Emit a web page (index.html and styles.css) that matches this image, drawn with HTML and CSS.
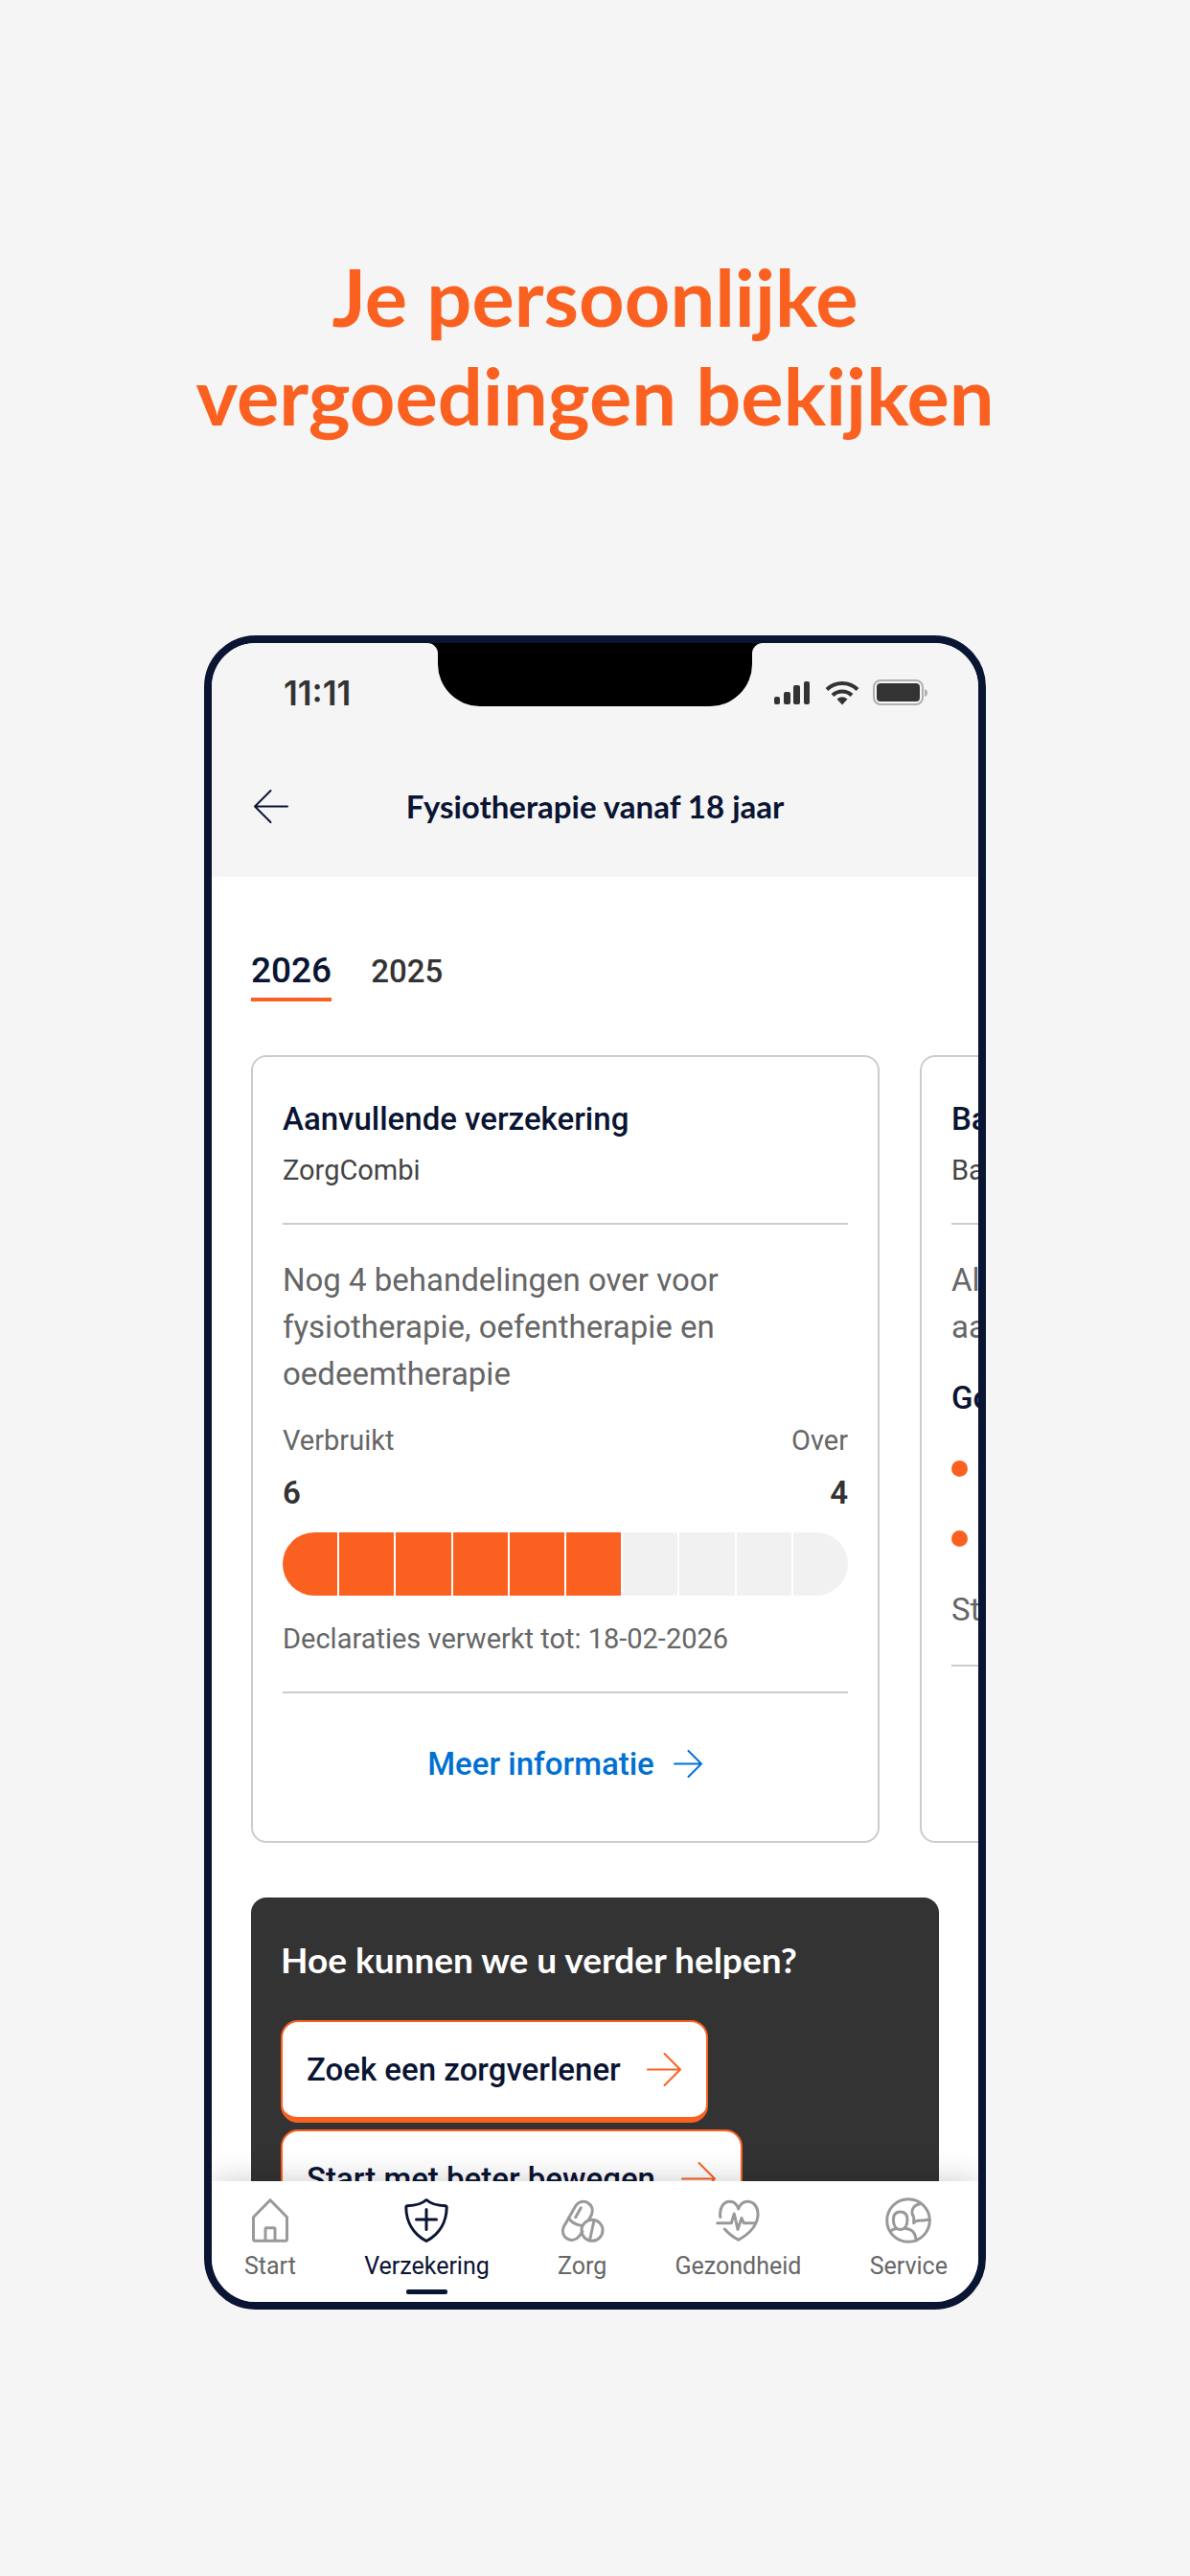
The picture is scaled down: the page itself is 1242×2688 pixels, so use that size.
FILE: index.html
```
<!DOCTYPE html>
<html lang="nl">

<head>
    <meta charset="UTF-8">
    <meta name="viewport" content="width=device-width, initial-scale=1.0">
    <title>Je persoonlijke vergoedingen bekijken</title>

    <link rel="stylesheet" href="styles.css">
</head>

<body>

    <h1 class="headline">Je persoonlijke<br>vergoedingen bekijken</h1>

    <div class="phone">

        <!-- Statusbalk -->
        <div class="status">
            <span class="time">11:11</span>
            <svg class="notch" width="350" height="66" viewBox="0 0 350 66">
                <path d="M0 0H350A11 11 0 0 0 339 11V22A44 44 0 0 1 295 66H55A44 44 0 0 1 11 22V11A11 11 0 0 0 0 0Z" />
            </svg>
            <svg class="signal" width="38" height="26" viewBox="0 0 38 26">
                <rect x="0" y="17" width="6" height="8" rx="2" />
                <rect x="10" y="12" width="7" height="13" rx="2" />
                <rect x="20" y="5" width="7" height="20" rx="2" />
                <rect x="31" y="1" width="6" height="24" rx="2" />
            </svg>
            <svg class="wifi" width="36" height="26" viewBox="0 0 36 26">
                <path class="arc" d="M2 9.500A23 23 0 0 1 34 9.500" />
                <path class="arc" d="M8 15.500A14.500 14.500 0 0 1 28 15.500" />
                <path d="M12.500 19.500Q18 15 23.500 19.500L18 25.500Z" />
            </svg>
            <svg class="battery" width="58" height="28" viewBox="0 0 58 28">
                <rect class="case" x="1" y="1" width="51" height="25" rx="7" />
                <rect x="4" y="4" width="45" height="19" rx="4" />
                <path class="cap" d="M54 10Q57 11 57 14T54 18Z" />
            </svg>
        </div>

        <header class="appbar">
            <a class="back" href="#" aria-label="Terug">
                <svg width="37" height="37" viewBox="0 0 37 37">
                    <path d="M36 18.500H2M18.500 2L2 18.500L18.500 35" />
                </svg>
            </a>
            <h2>Fysiotherapie vanaf 18 jaar</h2>
        </header>

        <main class="content">

            <nav class="years">
                <a class="active" href="#">2026</a>
                <a href="#">2025</a>
            </nav>

            <div class="cards">
                <section class="card">
                    <h3>Aanvullende verzekering</h3>
                    <p class="name">ZorgCombi</p>
                    <hr>
                    <p>Nog 4 behandelingen over voor fysiotherapie, oefentherapie en oedeemtherapie</p>
                    <dl class="usage">
                        <div>
                            <dt>Verbruikt</dt>
                            <dd>6</dd>
                        </div>
                        <div>
                            <dt>Over</dt>
                            <dd>4</dd>
                        </div>
                    </dl>
                    <div class="bar">
                        <i class="used"></i>
                        <i class="used"></i>
                        <i class="used"></i>
                        <i class="used"></i>
                        <i class="used"></i>
                        <i class="used"></i>
                        <i></i>
                        <i></i>
                        <i></i>
                        <i></i>
                    </div>
                    <p class="date">Declaraties verwerkt tot: 18-02-2026</p>
                    <hr>
                    <a class="more" href="#">
                        Meer informatie
                        <svg width="31" height="29" viewBox="0 0 31 29">
                            <path d="M1 14.500H29M15.500 1L29 14.500L15.500 28" />
                        </svg>
                    </a>
                </section>

                <section class="card">
                    <h3>Ba</h3>
                    <p class="name">Ba</p>
                    <hr>
                    <div class="info">
                        <p>Al<br>aa</p>
                        <h3>Go</h3>
                        <ul>
                            <li></li>
                            <li></li>
                        </ul>
                        <p>St</p>
                    </div>
                    <hr>
                </section>
            </div>

            <section class="help">
                <h2>Hoe kunnen we u verder helpen?</h2>
                <button type="button">
                    Zoek een zorgverlener
                    <svg width="37" height="37" viewBox="0 0 37 37">
                        <path d="M1 18.500H35M18.500 2L35 18.500L18.500 35" />
                    </svg>
                </button>
                <button type="button">
                    Start met beter bewegen
                    <svg width="37" height="37" viewBox="0 0 37 37">
                        <path d="M1 18.500H35M18.500 2L35 18.500L18.500 35" />
                    </svg>
                </button>
            </section>
        </main>

        <!-- Navigatie onderin -->
        <nav class="tabbar">
            <a href="#">
                <svg viewBox="0 0 48 48">
                    <path d="M24 2.700L6.500 20.500V43.500Q6.500 45.300 8.300 45.300H39.700Q41.500 45.300 41.500 43.500V20.500Z" />
                    <path d="M19 45V33Q19 31.700 20.300 31.700H27.700Q29 31.700 29 33V45" />
                </svg>
                Start
            </a>
            <a class="active" href="#">
                <svg viewBox="0 0 48 48">
                    <path d="M24 2.500C19 7 11 8.500 4.300 8.700Q2.800 8.800 2.800 10.500C3 25 10 38 24 45.500C38 38 45 25 45.200 10.500Q45.200 8.800 43.700 8.700C37 8.500 29 7 24 2.500Z" />
                    <path d="M13.500 23H34.500M24 12.500V33.500" />
                </svg>
                Verzekering
            </a>
            <a href="#">
                <svg viewBox="0 0 48 48">
                    <path d="M24 35.500L20.500 40.400A9.500 9.500 0 0 1 4.100 31L17.100 8.300A9.500 9.500 0 0 1 33.500 17.700L30.500 23.500" />
                    <path d="M9.500 21.500C12 26 17 28.500 23.500 29.500M22.300 10.700L16.700 20.700M36 24L31.700 44" />
                    <circle cx="34" cy="34.300" r="11" />
                </svg>
                Zorg
            </a>
            <a href="#">
                <svg viewBox="0 0 48 48">
                    <path d="M5.800 20.500C4.500 11 9 4.300 15.700 4.300C20 4.300 23 7 24.700 12C26.500 7 29.500 4.300 34 4.300C41 4.300 45.500 10 45 19C44 31 35 38.500 24.700 44.300Q16 39.500 10.300 33" />
                    <path d="M2.700 26.700H17.300L20.300 17L24 33.300L28 21.500L30.300 26.700H42.500" />
                </svg>
                Gezondheid
            </a>
            <a href="#">
                <svg viewBox="0 0 48 48">
                    <circle cx="24" cy="24" r="22.300" />
                    <path d="M15.700 15C20.500 15 23 18 23 23C23 29 20.500 33.500 15.700 33.500S8.400 29 8.400 23C8.400 18 11 15 15.700 15Z" />
                    <path d="M5.500 35Q8 33 11.500 32.500M20 32C27 33.500 31 34.500 32.300 45" />
                    <path d="M37 6.500C29 8 25.500 14 29.700 20.500V26.700C32 23 37 24.500 40 24Q43 23 46 23.300" />
                </svg>
                Service
            </a>
        </nav>
    </div>

</body>

</html>
```
FILE: styles.css
```
* {
    box-sizing: border-box;
    margin: 0;
    padding: 0;
}

body {
    display: flex;
    flex-direction: column;
    height: 100vh;
    padding: 258px 0 278px;
    background-color: #f5f5f5;
    font-family: Roboto, sans-serif;
    font-size: 33px;
    line-height: 49px;
    color: #666;
}

a {
    color: inherit;
    text-decoration: none;
}

svg {
    flex: none;
    fill: none;
    stroke: currentColor;
    stroke-linecap: round;
    stroke-linejoin: round;
    stroke-width: 2;
}

h3 {
    font-size: 33px;
    font-weight: 500;
    color: #0a1433;
}

hr {
    border: none;
    border-top: 2px solid #ccc;
}

.headline {
    margin-bottom: 199px;
    font-family: Lato, sans-serif;
    font-size: 83px;
    font-weight: 700;
    line-height: 103px;
    text-align: center;
    color: #fa6121;
}

/* --- Telefoon --- */
.phone {
    display: flex;
    flex: 1;
    flex-direction: column;
    min-height: 0;
    margin: 0 213px;
    overflow: hidden;
    border: 8px solid #0a1433;
    border-radius: 54px;
    background-color: white;
}

.status {
    position: relative;
    display: flex;
    flex: none;
    align-items: center;
    height: 104px;
    padding: 0 52px 0 75px;
    background-color: #f5f5f5;
    color: #333;
}

.status svg {
    fill: #333;
    stroke: none;
}

.time {
    margin-right: auto;
    font-family: Inter, sans-serif;
    font-size: 35px;
    font-weight: 600;
}

.status .notch {
    position: absolute;
    top: 0;
    left: calc(50% - 175px);
    fill: black;
}

.wifi {
    margin: 0 14px 0 15px;
}

.status .arc {
    fill: none;
    stroke: #333;
    stroke-width: 4;
    stroke-linecap: butt;
}

.status .case {
    fill: none;
    stroke: #b0b0b0;
    stroke-width: 2;
}

.status .cap {
    fill: #b0b0b0;
}

.appbar {
    display: grid;
    flex: none;
    grid-template-columns: 37px 1fr 37px;
    align-items: center;
    height: 140px;
    padding: 0 43px 8px;
    background-color: #f5f5f5;
    color: #0a1433;
}

.back {
    display: flex;
}

.appbar h2 {
    font-family: Lato, sans-serif;
    font-size: 33px;
    font-weight: 700;
    text-align: center;
}

.content {
    flex: 1;
    min-height: 0;
    overflow: hidden;
    padding: 73px 0 0 41px;
}

.years {
    display: flex;
    align-items: baseline;
    gap: 41px;
    margin-bottom: 56px;
    font-weight: 500;
    color: #333;
}

.years .active {
    padding-bottom: 4px;
    border-bottom: 4px solid #fa6121;
    font-size: 37px;
    color: #0a1433;
}

/* --- Kaarten --- */
.cards {
    display: flex;
    gap: 42px;
    margin-bottom: 57px;
}

.card {
    flex: 0 0 calc(100% - 103px);
    padding: 40px 31px;
    border: 2px solid #ccc;
    border-radius: 16px;
}

.card .name {
    margin: 8px 0 33px;
    font-size: 29px;
    line-height: 43px;
    color: #444;
}

.card hr + p {
    margin: 33px 0 24px;
}

.usage {
    display: flex;
    justify-content: space-between;
    margin-bottom: 17px;
}

.usage div:last-child {
    text-align: right;
}

.usage dt {
    margin-bottom: 8px;
    font-size: 29px;
    line-height: 43px;
}

.usage dd {
    font-weight: 600;
    color: #333;
}

.bar {
    display: flex;
    gap: 2px;
    height: 66px;
    overflow: hidden;
    border-radius: 33px;
}

.bar i {
    flex: 1;
    background-color: #f1f1f1;
}

.bar .used {
    background-color: #fa6121;
}

.card .date {
    margin: 24px 0 33px;
    font-size: 29px;
    line-height: 43px;
}

.more {
    display: flex;
    align-items: center;
    justify-content: center;
    gap: 20px;
    height: 82px;
    margin-top: 32px;
    font-weight: 500;
    color: #0070d2;
}

.info {
    display: flex;
    flex-direction: column;
    gap: 25px;
    padding: 33px 0;
}

.info ul {
    display: flex;
    flex-direction: column;
    gap: 24px;
    list-style: none;
}

.info li {
    display: flex;
    align-items: center;
    height: 49px;
}

.info li::before {
    content: "";
    width: 17px;
    height: 17px;
    border-radius: 50%;
    background-color: #fa6121;
}

/* --- Hulp --- */
.help {
    display: flex;
    flex-direction: column;
    align-items: flex-start;
    gap: 7px;
    margin-right: 41px;
    padding: 40px 31px;
    border-radius: 16px;
    background-color: #333;
}

.help h2 {
    margin-bottom: 32px;
    font-family: Lato, sans-serif;
    font-size: 37px;
    font-weight: 700;
    color: white;
}

.help button {
    display: flex;
    align-items: center;
    gap: 27px;
    height: 107px;
    padding: 0 25px;
    border: 2px solid #fa6121;
    border-bottom-width: 6px;
    border-radius: 18px;
    background-color: white;
    font-family: inherit;
    font-size: 33px;
    font-weight: 500;
    color: #0a1433;
}

.help button svg {
    color: #fa6121;
}

/* --- Tabbalk --- */
.tabbar {
    position: relative;
    display: flex;
    flex: none;
    justify-content: space-between;
    padding: 17px 32px 8px 34px;
    background-color: white;
    box-shadow: 0 0 32px rgba(0, 0, 0, 0.2);
    font-size: 25px;
    line-height: 32px;
}

.tabbar a {
    display: flex;
    flex-direction: column;
    align-items: center;
    gap: 8px;
}

.tabbar a::after {
    content: "";
    width: 43px;
    height: 5px;
    border-radius: 2px;
}

.tabbar svg {
    width: 48px;
    height: 48px;
    color: #999;
    stroke-width: 3;
}

.tabbar .active,
.tabbar .active svg {
    color: #0a1433;
}

.tabbar .active::after {
    background-color: #0a1433;
}
```
